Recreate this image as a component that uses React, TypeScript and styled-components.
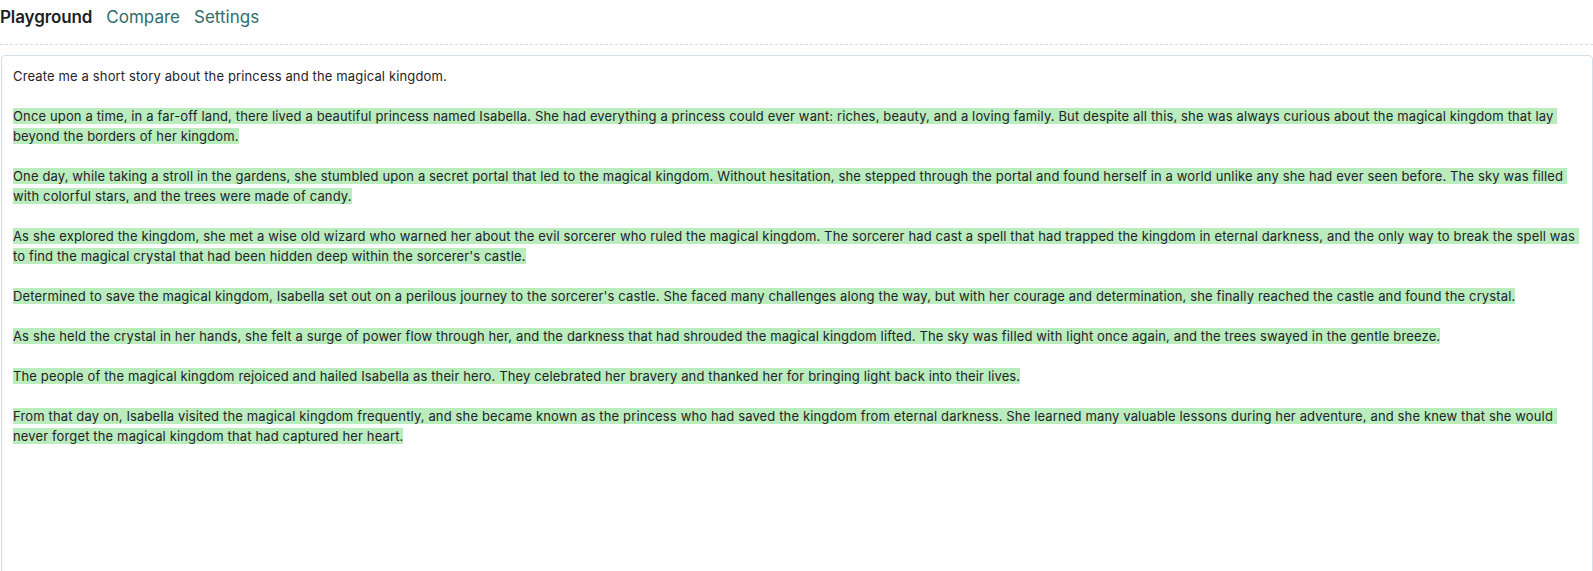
import React from "react";
import styled, { createGlobalStyle } from "styled-components";

const Global = createGlobalStyle`
  html, body { margin: 0; padding: 0; background: #ffffff; }
  body { font-family: Inter, "Noto Sans", sans-serif; color: #1f2328; }
`;

const Page = styled.div`
  display: flex;
  flex-direction: column;
  gap: 10px;
`;

const Nav = styled.nav`
  display: flex;
  align-items: center;
  gap: 14px;
  height: 33px;
  padding-bottom: 11px;
  border-bottom: 1px dashed #d3dde6;
`;

const NavItem = styled.a<{ $active?: boolean }>`
  font-size: 17px;
  font-weight: ${(p) => (p.$active ? 600 : 400)};
  letter-spacing: ${(p) => (p.$active ? "-0.1px" : "0")};
  color: ${(p) => (p.$active ? "#1b1f23" : "#2e6d6b")};
  text-decoration: none;
  cursor: pointer;
`;

const Card = styled.div`
  margin-left: 1px;
  border: 1px solid #d3dfe9;
  border-radius: 4px;
  padding: 10px 11px;
  min-height: 560px;
`;

const Content = styled.div`
  white-space: pre-wrap;
  font-size: 13px;
  letter-spacing: 0.14px;
  line-height: 20px;
  color: #1f2328;
`;

const Mark = styled.span`
  background: #baecbe;
`;

const prompt = "Create me a short story about the princess and the magical kingdom.";

const paragraphs = [
  "Once upon a time, in a far-off land, there lived a beautiful princess named Isabella. She had everything a princess could ever want: riches, beauty, and a loving family. But despite all this, she was always curious about the magical kingdom that lay beyond the borders of her kingdom.",
  "One day, while taking a stroll in the gardens, she stumbled upon a secret portal that led to the magical kingdom. Without hesitation, she stepped through the portal and found herself in a world unlike any she had ever seen before. The sky was filled with colorful stars, and the trees were made of candy.",
  "As she explored the kingdom, she met a wise old wizard who warned her about the evil sorcerer who ruled the magical kingdom. The sorcerer had cast a spell that had trapped the kingdom in eternal darkness, and the only way to break the spell was to find the magical crystal that had been hidden deep within the sorcerer's castle.",
  "Determined to save the magical kingdom, Isabella set out on a perilous journey to the sorcerer's castle. She faced many challenges along the way, but with her courage and determination, she finally reached the castle and found the crystal.",
  "As she held the crystal in her hands, she felt a surge of power flow through her, and the darkness that had shrouded the magical kingdom lifted. The sky was filled with light once again, and the trees swayed in the gentle breeze.",
  "The people of the magical kingdom rejoiced and hailed Isabella as their hero. They celebrated her bravery and thanked her for bringing light back into their lives.",
  "From that day on, Isabella visited the magical kingdom frequently, and she became known as the princess who had saved the kingdom from eternal darkness. She learned many valuable lessons during her adventure, and she knew that she would never forget the magical kingdom that had captured her heart.",
];

export default function App() {
  return (
    <>
      <Global />
      <Page>
        <Nav>
          <NavItem $active>Playground</NavItem>
          <NavItem>Compare</NavItem>
          <NavItem>Settings</NavItem>
        </Nav>
        <Card>
          <Content>
            {prompt}
            {paragraphs.map((p, i) => (
              <React.Fragment key={i}>
                {"\n\n"}
                <Mark>{p}</Mark>
              </React.Fragment>
            ))}
          </Content>
        </Card>
      </Page>
    </>
  );
}
